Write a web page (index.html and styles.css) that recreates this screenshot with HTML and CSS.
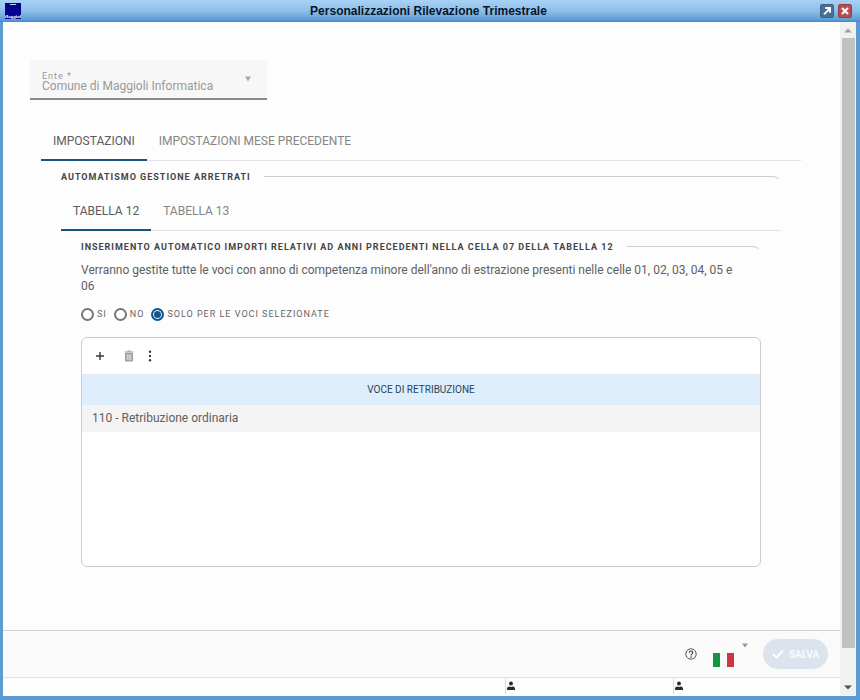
FILE: index.html
```html
<!DOCTYPE html>
<html lang="it">
<head>
<meta charset="utf-8">
<title>Personalizzazioni Rilevazione Trimestrale</title>
<link rel="stylesheet" href="styles.css">
</head>
<body>
<div class="window">
  <header class="titlebar">
    <svg class="logo" viewBox="0 0 16 16" aria-hidden="true">
      <rect width="16" height="16" fill="#04048c"/>
      <path d="M5 1.5h6" stroke="#c9cdf0"/>
      <text x="8" y="15" text-anchor="middle" class="logo-text">Maggioli</text>
    </svg>
    <h1 class="title">Personalizzazioni Rilevazione Trimestrale</h1>
    <div class="window-buttons">
      <button type="button" class="win-btn" aria-label="Ingrandisci">
        <svg viewBox="0 0 14 14"><path d="M3.500 11l6-6M5 3.500h5.500V9" fill="none" stroke="#fff" stroke-width="2.200"/></svg>
      </button>
      <button type="button" class="win-btn win-close" aria-label="Chiudi">
        <svg viewBox="0 0 14 14"><path d="M3.500 3.500l7 7M10.500 3.500l-7 7" fill="none" stroke="#fff" stroke-width="2.400"/></svg>
      </button>
    </div>
  </header>
  <div class="frame">
    <div class="page">
      <main class="content">
        <div class="field">
          <label for="ente" class="field-label">Ente *</label>
          <select id="ente" class="field-select" disabled>
            <option>Comune di Maggioli Informatica</option>
          </select>
          <svg class="field-caret" viewBox="0 0 8 6" aria-hidden="true"><path d="M1 0.500h6L4 5.500z" fill="#aaa"/></svg>
        </div>
        <section class="settings">
          <nav class="tabs">
            <button type="button" class="tab active">IMPOSTAZIONI</button>
            <button type="button" class="tab">IMPOSTAZIONI MESE PRECEDENTE</button>
          </nav>
          <fieldset class="group">
            <legend class="legend">AUTOMATISMO GESTIONE ARRETRATI</legend>
            <nav class="tabs">
              <button type="button" class="tab active">TABELLA 12</button>
              <button type="button" class="tab">TABELLA 13</button>
            </nav>
            <fieldset class="group">
              <legend class="legend">INSERIMENTO AUTOMATICO IMPORTI RELATIVI AD ANNI PRECEDENTI NELLA CELLA 07 DELLA TABELLA 12</legend>
              <p class="description">Verranno gestite tutte le voci con anno di competenza minore dell'anno di estrazione presenti nelle celle 01, 02, 03, 04, 05 e 06</p>
              <div class="radios">
                <label class="radio"><input type="radio" name="mode">SI</label>
                <label class="radio"><input type="radio" name="mode">NO</label>
                <label class="radio"><input type="radio" name="mode" checked>SOLO PER LE VOCI SELEZIONATE</label>
              </div>
              <div class="grid-box">
                <div class="toolbar">
                  <button type="button" class="tool" aria-label="Aggiungi">
                    <svg viewBox="0 0 12 12"><path d="M6 2v8M2 6h8" stroke="#3a3a3a" stroke-width="1.400"/></svg>
                  </button>
                  <button type="button" class="tool tool-delete" aria-label="Elimina" disabled>
                    <svg viewBox="0 0 12 12"><path d="M1.500 2h9M4.500 1h3M2.500 3.500h7v7.500h-7z" fill="#b4b4b4" stroke="#999"/><path d="M4.500 4.500v5.500M6 4.500v5.500M7.500 4.500v5.500" stroke="#dedede" stroke-width=".7"/></svg>
                  </button>
                  <button type="button" class="tool" aria-label="Altre azioni">
                    <svg viewBox="0 0 12 12" fill="#3a3a3a"><circle cx="6" cy="1.800" r="1.200"/><circle cx="6" cy="6" r="1.200"/><circle cx="6" cy="10.200" r="1.200"/></svg>
                  </button>
                </div>
                <table class="grid">
                  <thead><tr><th scope="col">VOCE DI RETRIBUZIONE</th></tr></thead>
                  <tbody><tr><td>110 - Retribuzione ordinaria</td></tr></tbody>
                </table>
              </div>
            </fieldset>
          </fieldset>
        </section>
      </main>
      <footer class="actions">
        <button type="button" class="help" aria-label="Aiuto">
          <svg viewBox="0 0 12 12"><circle cx="6" cy="6" r="5.200" fill="none" stroke="#444" stroke-width=".9"/><path d="M4.300 4.700c0-2.300 3.500-2.300 3.500 0C7.800 5.900 6 5.900 6 7.400" fill="none" stroke="#333" stroke-width="1.100"/><circle cx="6" cy="9" r=".75" fill="#333"/></svg>
        </button>
        <button type="button" class="language" aria-label="Lingua italiana">
          <svg class="flag" viewBox="0 0 21 14"><path d="M0 0h7v14H0z" fill="#159447"/><path d="M7 0h7v14H7z" fill="#f7f7f7"/><path d="M14 0h7v14h-7z" fill="#ce3540"/></svg>
          <svg class="flag-caret" viewBox="0 0 6 5"><path d="M0 .5h6L3 4.500z" fill="#999"/></svg>
        </button>
        <button type="button" class="save" disabled>
          <svg viewBox="0 0 12 10"><path d="M1 5l3.500 3.500L11 1.500" fill="none" stroke="#fff" stroke-width="2"/></svg>
          SALVA
        </button>
      </footer>
      <div class="status">
        <span class="status-cell"></span>
        <span class="status-cell"><svg class="user" viewBox="0 0 8 10"><circle cx="4" cy="2.500" r="2"/><path d="M0 9V7.500Q0 5.500 2.500 5.500L4 6l1.500-.5Q8 5.500 8 7.500V9z"/></svg></span>
        <span class="status-cell"><svg class="user" viewBox="0 0 8 10"><circle cx="4" cy="2.500" r="2"/><path d="M0 9V7.500Q0 5.500 2.500 5.500L4 6l1.500-.5Q8 5.500 8 7.500V9z"/></svg></span>
      </div>
    </div>
    <div class="scrollbar" aria-hidden="true">
      <svg class="arrow" viewBox="0 0 8 5"><path d="M0 4.500L4 .5l4 4z" fill="#a3a3a3"/></svg>
      <div class="track"><div class="thumb"></div></div>
      <svg class="arrow" viewBox="0 0 8 5"><path d="M0 .5h8l-4 4z" fill="#505050"/></svg>
    </div>
  </div>
</div>
</body>
</html>
```
FILE: styles.css
```css
* { box-sizing: border-box; }
body { margin: 0; font-family: Roboto, sans-serif; font-size: 12px; color: #606060; }
button { padding: 0; border: 0; background: none; font: inherit; color: inherit; }
svg { display: block; }

.window { display: flex; flex-direction: column; min-height: 100vh; background: #5a9bd4; }
.titlebar {
  display: grid; grid-template-columns: 1fr auto 1fr; align-items: center;
  height: 22px; padding: 0 8px 0 5px;
  background: linear-gradient(#a9d1f5, #8dbfea 50%, #5c9dd8 90%, #4788c4);
}
.logo { width: 16px; height: 16px; }
.logo-text { font: bold 5px "Liberation Serif", serif; fill: #fff; }
.title { margin: 0; font: bold 12px/16px "Liberation Sans", sans-serif; color: #081629; }
.window-buttons { display: flex; justify-content: flex-end; gap: 4px; }
.win-btn { width: 14px; height: 14px; background: #496f94; border: 1px solid #3d6288; border-radius: 2px; }
.win-close { background: #b94c4c; border-color: #963e48; }

.frame { display: flex; flex: 1; margin: 0 4px 4px 3px; background: #fdfdfd; }
.page { display: flex; flex-direction: column; flex: 1; min-width: 0; }
.content { flex: 1; padding: 38px 39px 0 27px; }

.field { position: relative; width: 237px; height: 40px; padding: 11px 12px 0; background: #f7f7f7; border-bottom: 2px solid #8b8b8b; }
.field-label { display: block; font-size: 9px; line-height: 10px; letter-spacing: 1px; color: #999; }
.field-select { display: block; width: 100%; height: 14px; margin: -2px 0 0; padding: 0; border: 0; appearance: none; background: none; font: 12px/14px Roboto, sans-serif; color: #999; opacity: 1; }
.field-caret { position: absolute; right: 15px; top: 16px; width: 8px; height: 6px; }

.settings { padding: 22px 0 0 11px; }
.tabs { display: flex; border-bottom: 1px solid #e3e3e3; }
.tab { height: 39px; margin-bottom: -1px; padding: 0 12px; border-bottom: 2px solid transparent; color: #858585; }
.tab.active { border-color: #17557f; color: #5c5c5c; }

.group { min-width: 0; margin: 0; padding: 0 20px; border: 0; }
.legend { display: flex; align-items: center; gap: 13px; width: 100%; height: 31px; padding: 0; font-size: 9px; font-weight: 700; letter-spacing: 1px; color: #444; white-space: nowrap; }
.legend::after { content: ""; flex: 1; height: 8px; margin-top: 8px; border-top: 1px solid #ccc; border-right: 1px solid transparent; border-top-right-radius: 8px; }

.description { margin: 0; padding-right: 14px; font-size: 12px; line-height: 16px; }
.radios { display: flex; gap: 7px; margin: 11px 0 14px; }
.radio { display: flex; align-items: center; gap: 3px; height: 18px; font-size: 9px; letter-spacing: 1px; color: #666; }
.radio input { appearance: none; width: 13px; height: 13px; margin: 0; border: 2px solid #777; border-radius: 50%; background: #fff; }
.radio input:checked { border-color: #0f5596; background: #0f5596; box-shadow: inset 0 0 0 1px #fff; }

.grid-box { min-height: 230px; border: 1px solid #ccc; border-radius: 6px; background: #fff; }
.toolbar { display: flex; align-items: center; gap: 9px; height: 36px; padding-left: 12px; }
.tool { width: 12px; height: 12px; }
.tool-delete { margin-left: 8px; }
.grid { width: 100%; border-collapse: collapse; }
.grid th { height: 30px; padding: 0; background: #deeefc; border-top: 1px solid #e4e9ed; font-size: 10px; font-weight: 400; color: #264657; }
.grid td { height: 27px; padding: 0 10px; background: #f4f4f4; }

.actions { display: flex; align-items: center; justify-content: flex-end; height: 47px; padding-right: 12px; border-top: 1px solid #d2d2d2; background: #fafafa; }
.help { width: 12px; height: 12px; }
.language { display: flex; align-items: flex-start; gap: 8px; margin: 0 15px 0 16px; }
.flag { width: 21px; height: 14px; margin-top: 12px; }
.flag-caret { width: 6px; height: 5px; margin-top: 2px; }
.save { display: flex; align-items: center; justify-content: center; gap: 5px; width: 65px; height: 30px; border-radius: 15px; background: #dbe4ec; color: #f8fafc; font-size: 10px; font-weight: 700; }
.save svg { width: 12px; height: 10px; }

.status { display: grid; grid-template-columns: 3fr 1fr 1fr; height: 19px; border-top: 1px solid #e2e2e2; }
.status-cell { height: 16px; padding: 3px 0 0 1px; }
.status-cell + .status-cell { border-left: 1px solid #ddd; }
.user { width: 8px; height: 10px; fill: #2b2b2b; }

.scrollbar { display: flex; flex-direction: column; align-items: center; width: 16px; padding: 6px 0; background: #f1f1f1; }
.arrow { width: 8px; height: 5px; }
.track { flex: 1; width: 13px; margin: 5px 0; }
.thumb { height: 95%; background: #c1c1c1; }
```
